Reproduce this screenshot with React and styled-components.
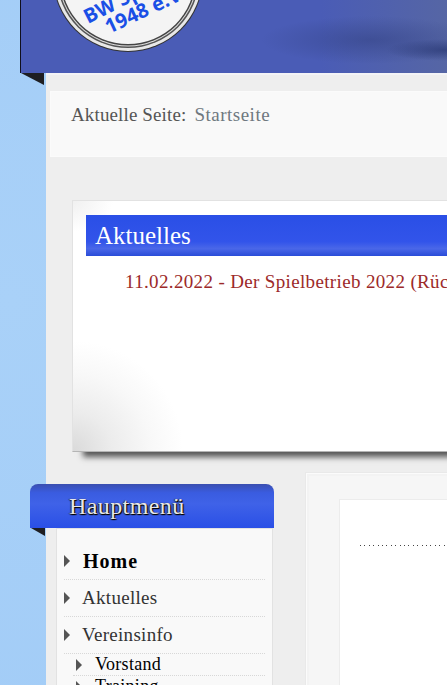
import React from "react";
import styled, { createGlobalStyle } from "styled-components";

const GlobalStyle = createGlobalStyle`
  html, body {
    margin: 0;
    padding: 0;
    height: 685px;
    overflow: hidden;
    background: #a4cdf7;
    font-family: "Liberation Serif", "DejaVu Serif", serif;
  }
`;

const Page = styled.div`
  width: 1100px;
  height: 685px;
  overflow: hidden;
  padding-left: 20px;
  box-sizing: border-box;
  background: radial-gradient(circle at 10px 300px, #a9d1f8, #9fcaf6 60%);
`;

const Body = styled.div`
  position: relative;
`;

const Header = styled.header`
  height: 73px;
  display: flex;
  padding-left: 32px;
  overflow: hidden;
  box-sizing: border-box;
  border-left: 1px solid #10101c;
  background:
    radial-gradient(ellipse 60px 11px at 425px 50px, rgba(40, 55, 115, 0.7), rgba(40, 55, 115, 0) 100%),
    radial-gradient(ellipse 110px 24px at 350px 40px, rgba(50, 65, 130, 0.55), rgba(50, 65, 130, 0) 100%),
    linear-gradient(90deg, #4a5cb6 0, #4a5cb6 300px, #5666a4 430px);
`;

const Logo = styled.svg`
  flex: none;
  width: 150px;
  height: 150px;
  margin-top: -98px;
`;

const Fold = styled.div`
  width: 0;
  height: 0;
  position: absolute;
  left: ${(p) => p.$left}px;
  top: ${(p) => p.$top}px;
  border-top: ${(p) => p.$height}px solid #1e1e22;
  border-left: ${(p) => p.$size}px solid transparent;
`;

const Main = styled.main`
  margin-left: 26px;
  height: 612px;
  box-sizing: border-box;
  background: #eeeeee;
  padding: 18px 0 0 4px;
  box-shadow: inset 0 2px 0 #f3f3f6;
`;

const Breadcrumb = styled.div`
  height: 66px;
  box-sizing: border-box;
  background: #f9f9f9;
  border: 1px solid #fbfbfb;
  padding: 12px 0 0 20px;
  font-size: 19px;
  letter-spacing: 0.13px;
  line-height: 21px;
  color: #555;
`;

const Current = styled.span`
  margin-left: 8px;
  letter-spacing: 0.5px;
  color: #6f7880;
`;

const NewsCard = styled.section`
  margin: 43px 0 0 22px;
  height: 252px;
  box-sizing: border-box;
  padding: 14px 0 0 13px;
  border: 1px solid #e2e2e2;
  border-bottom-color: #b5b5b5;
  background:
    radial-gradient(ellipse 110px 110px at 0 100%, #dadada, #ececec 35%, #f8f8f8 70%, rgba(255, 255, 255, 0) 100%),
    radial-gradient(ellipse 40px 30px at 0 0, #f0f0f0, rgba(255, 255, 255, 0) 100%),
    #ffffff;
  box-shadow: 8px 8px 6px -3px #555;
`;

const NewsTitle = styled.h2`
  margin: 0;
  height: 41px;
  padding-left: 9px;
  font-size: 25px;
  font-weight: 400;
  line-height: 41px;
  color: #fff;
  background: linear-gradient(#2a4fe6 0, #3254ea 65%, #4a67e8 82%, #2a4cd8 100%);
`;

const NewsLine = styled.p`
  margin: 15px 0 0 39px;
  font-size: 19px;
  letter-spacing: 0.35px;
  line-height: 21px;
  color: #9c2a2a;
  white-space: nowrap;
`;

const Columns = styled.div`
  display: flex;
  align-items: flex-start;
  margin: 20px 0 0 -20px;
`;

const Sidebar = styled.aside`
  flex: none;
  width: 244px;
  margin-top: 12px;
`;

const MenuTitle = styled.h3`
  margin: 0;
  height: 44px;
  padding-left: 39px;
  border-radius: 8px 8px 0 0;
  font-size: 24px;
  letter-spacing: 0.4px;
  font-weight: 400;
  line-height: 44px;
  color: #e8e8e8;
  text-shadow: 1px 1px 1px #000, -1px 0 1px #333, 0 1px 1px #222;
  background: linear-gradient(#3a4fb0 0, #3a5ce0 20%, #3f62e8 45%, #2a4fe6 100%);
`;

const MenuBox = styled.nav`
  margin-left: 26px;
  width: 217px;
  box-sizing: border-box;
  height: 160px;
  padding: 14px 7px 0 7px;
  background: #f9f9f9;
  border: 1px solid #e2e2e2;
  border-bottom: 0;
`;

const MenuItem = styled.a`
  display: flex;
  align-items: center;
  height: ${(p) => (p.$sub ? 22 : 37)}px;
  box-sizing: border-box;
  margin-left: ${(p) => (p.$sub ? 9 : 0)}px;
  padding-left: ${(p) => (p.$sub ? 3 : 0)}px;
  border-bottom: 1px dotted #d8d8d8;
  font-size: ${(p) => (p.$sub ? 18 : p.$bold ? 20 : 19)}px;
  letter-spacing: ${(p) => (p.$bold ? 1 : 0.3)}px;
  font-weight: ${(p) => (p.$bold ? 700 : 400)};
  color: ${(p) => (p.$dark ? "#000" : "#333")};
`;

const Arrow = styled.span`
  flex: none;
  width: 0;
  height: 0;
  margin-right: ${(p) => p.$gap || 13}px;
  border-left: 6px solid #555;
  border-top: 6px solid transparent;
  border-bottom: 6px solid transparent;
`;

const Content = styled.div`
  flex: none;
  width: 700px;
  height: 260px;
  margin-left: 31px;
  padding: 26px 0 0 33px;
  box-sizing: border-box;
  background: #f6f6f6;
  border: 1px solid #e9e9e9;
  box-shadow: inset 1px 1px 0 #fbfbfb, inset 3px 3px 0 #f3f3f3;
`;

const ContentInner = styled.div`
  height: 300px;
  background: #fff;
  border: 1px solid #ececec;
  padding: 45px 0 0 20px;
`;

const Dots = styled.div`
  height: 1px;
  background: repeating-linear-gradient(90deg, #444 0, #444 1px, transparent 1px, transparent 4.4px);
`;

export default function App() {
  return (
    <>
      <GlobalStyle />
      <Page>
        <Body>
          <Header>
            <Logo viewBox="0 0 150 150">
              <circle cx="75" cy="75" r="75" fill="#333" />
              <circle cx="75" cy="75" r="74" fill="#e8e8e8" />
              <circle cx="75" cy="75" r="71" fill="#555" />
              <circle cx="75" cy="75" r="69.5" fill="#ddd" />
              <circle cx="75" cy="75" r="68.5" fill="#444" />
              <circle cx="75" cy="75" r="67" fill="#f4f4f4" />
              <g fill="#1a4fe6" fontFamily="'Open Sans', sans-serif" fontWeight="700">
                <text x="0" y="0" fontSize="20" transform="translate(35 122) rotate(-27)">BW Sp</text>
                <text x="0" y="0" fontSize="20" transform="translate(56 132) rotate(-25)">1948 e.V.</text>
              </g>
            </Logo>
          </Header>
          <Fold $left={1} $top={73} $size={23} $height={12} />
          <Main>
            <Breadcrumb>
              Aktuelle Seite:<Current>Startseite</Current>
            </Breadcrumb>
            <NewsCard>
              <NewsTitle>Aktuelles</NewsTitle>
              <NewsLine>11.02.2022 - Der Spielbetrieb 2022 (Rückrunde)</NewsLine>
            </NewsCard>
            <Columns>
              <Sidebar>
                <MenuTitle>Hauptmenü</MenuTitle>
                <MenuBox>
                  <MenuItem $bold $dark><Arrow />Home</MenuItem>
                  <MenuItem><Arrow $gap={12} />Aktuelles</MenuItem>
                  <MenuItem><Arrow $gap={12} />Vereinsinfo</MenuItem>
                  <MenuItem $sub $dark><Arrow />Vorstand</MenuItem>
                  <MenuItem $sub $dark><Arrow />Training</MenuItem>
                </MenuBox>
              </Sidebar>
              <Content>
                <ContentInner>
                  <Dots />
                </ContentInner>
              </Content>
            </Columns>
          </Main>
          <Fold $left={11} $top={528} $size={14} $height={8} />
        </Body>
      </Page>
    </>
  );
}
